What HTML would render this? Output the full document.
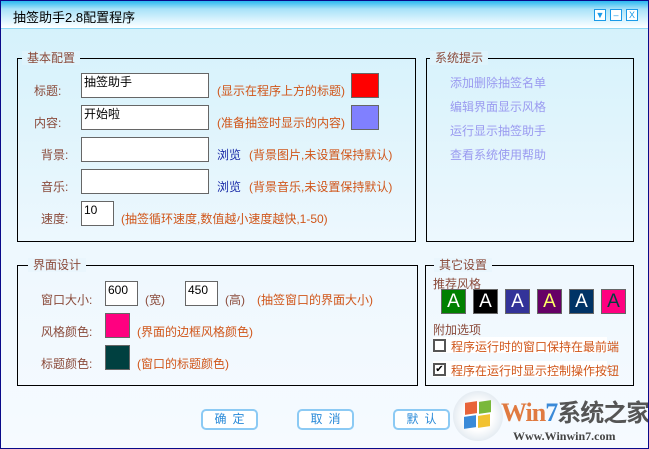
<!DOCTYPE html>
<html><head><meta charset="utf-8">
<style>
*{margin:0;padding:0;box-sizing:border-box}
body{width:649px;height:449px;overflow:hidden;font-family:"Liberation Sans","Noto Sans CJK SC",sans-serif;font-size:12px}
#w{position:absolute;left:0;top:0;width:649px;height:449px;border:1px solid #0a0a8a;background:linear-gradient(#d2f1fb 0px,#dff4fc 120px,#eef8fe 250px,#f6faff 449px);overflow:hidden}
#tb{position:absolute;left:0;top:0;width:647px;height:28px;background:linear-gradient(#2ab8f0 0px,#a8e2f8 8px,#e8f8ff 22px,#fff 27px);border-bottom:1px solid #8fd8f4}
#tt{position:absolute;left:12px;top:6px;font-size:13px;color:#000}
.wb{position:absolute;top:8px;width:12px;height:12px;border:1px solid #1a9ae8;background:#fff;color:#1a9ae8;font-size:9px;line-height:10px;text-align:center}
.a{position:absolute;white-space:nowrap}
.box{position:absolute;border:1px solid #000}
.lg{position:absolute;background:#dff4fc;padding:0 5px;color:#8a4a3a;font-size:12px;line-height:14px}
.lb{color:#8a4a3a}
.h{color:#d0561a}
.in{position:absolute;background:#fff;border:1px solid #666;font-size:12px;padding:1px 2px;line-height:14px;color:#000}
.sw{position:absolute;border:1px solid #666}
.lk{color:#9a9af0}
.bt{position:absolute;width:57px;height:21px;border:2px solid #8ccaf4;border-radius:5px;background:#fff;color:#2a8ad8;text-align:center;line-height:17px;letter-spacing:6px;padding-left:6px}
.st{position:absolute;top:288px;width:25px;height:25px;border:1px solid #666;color:#fff;font-size:19px;text-align:center;line-height:23px}
.cb{position:absolute;left:432px;width:13px;height:13px;border:2px solid #555;background:#fff;font-size:10px;line-height:9px;text-align:center}
</style></head><body><div id="w">
<div id="tb"><div id="tt">抽签助手2.8配置程序</div>
<div class="wb" style="left:593px">▼</div><div class="wb" style="left:609px">–</div><div class="wb" style="left:625px">X</div></div>

<div class="box" style="left:16px;top:57px;width:399px;height:184px"></div>
<div class="lg" style="left:21px;top:50px">基本配置</div>
<div class="box" style="left:425px;top:57px;width:208px;height:184px"></div>
<div class="lg" style="left:429px;top:50px">系统提示</div>

<div class="a lb" style="left:33px;top:81px">标题:</div>
<div class="in" style="left:80px;top:72px;width:128px;height:25px">抽签助手</div>
<div class="a h" style="left:216px;top:81px">(显示在程序上方的标题)</div>
<div class="sw" style="left:350px;top:72px;width:28px;height:25px;background:#f00"></div>

<div class="a lb" style="left:33px;top:113px">内容:</div>
<div class="in" style="left:80px;top:104px;width:128px;height:25px">开始啦</div>
<div class="a h" style="left:216px;top:113px">(准备抽签时显示的内容)</div>
<div class="sw" style="left:350px;top:104px;width:28px;height:25px;background:#8080ff"></div>

<div class="a lb" style="left:40px;top:145px">背景:</div>
<div class="in" style="left:80px;top:136px;width:128px;height:25px"></div>
<div class="a" style="left:216px;top:145px;color:#1a2aa8">浏览</div>
<div class="a h" style="left:248px;top:145px">(背景图片,未设置保持默认)</div>

<div class="a lb" style="left:40px;top:177px">音乐:</div>
<div class="in" style="left:80px;top:168px;width:128px;height:25px"></div>
<div class="a" style="left:216px;top:177px;color:#1a2aa8">浏览</div>
<div class="a h" style="left:248px;top:177px">(背景音乐,未设置保持默认)</div>

<div class="a lb" style="left:40px;top:209px">速度:</div>
<div class="in" style="left:80px;top:200px;width:33px;height:25px">10</div>
<div class="a h" style="left:120px;top:209px">(抽签循环速度,数值越小速度越快,1-50)</div>

<div class="a lk" style="left:449px;top:73px">添加删除抽签名单</div>
<div class="a lk" style="left:449px;top:97px">编辑界面显示风格</div>
<div class="a lk" style="left:449px;top:121px">运行显示抽签助手</div>
<div class="a lk" style="left:449px;top:145px">查看系统使用帮助</div>

<div class="box" style="left:16px;top:264px;width:401px;height:121px"></div>
<div class="lg" style="left:27px;top:257px;background:#eaf6fd">界面设计</div>
<div class="box" style="left:424px;top:264px;width:209px;height:121px"></div>
<div class="lg" style="left:433px;top:257px;background:#eaf6fd">其它设置</div>

<div class="a lb" style="left:40px;top:290px">窗口大小:</div>
<div class="in" style="left:104px;top:280px;width:33px;height:25px">600</div>
<div class="a lb" style="left:144px;top:290px">(宽)</div>
<div class="in" style="left:184px;top:280px;width:33px;height:25px">450</div>
<div class="a lb" style="left:224px;top:290px">(高)</div>
<div class="a h" style="left:256px;top:290px">(抽签窗口的界面大小)</div>

<div class="a lb" style="left:40px;top:322px">风格颜色:</div>
<div class="sw" style="left:104px;top:312px;width:25px;height:25px;background:#ff0080"></div>
<div class="a h" style="left:136px;top:322px">(界面的边框风格颜色)</div>
<div class="a lb" style="left:40px;top:354px">标题颜色:</div>
<div class="sw" style="left:104px;top:344px;width:25px;height:25px;background:#004040"></div>
<div class="a h" style="left:136px;top:354px">(窗口的标题颜色)</div>

<div class="a lb" style="left:432px;top:274px">推荐风格</div>
<div class="st" style="left:440px;background:#008000">A</div>
<div class="st" style="left:472px;background:#000">A</div>
<div class="st" style="left:504px;background:#333399">A</div>
<div class="st" style="left:536px;background:#660066;color:#ffff66">A</div>
<div class="st" style="left:568px;background:#003366">A</div>
<div class="st" style="left:600px;background:#ff0080;color:#004040">A</div>
<div class="a lb" style="left:432px;top:320px">附加选项</div>
<div class="a" style="left:432px;top:336px;width:174px;height:16px;background:#fff"></div>
<div class="cb" style="top:338px"></div>
<div class="a h" style="left:450px;top:337px">程序运行时的窗口保持在最前端</div>
<div class="a" style="left:432px;top:360px;width:174px;height:16px;background:#fff"></div>
<div class="cb" style="top:362px">✔</div>
<div class="a h" style="left:450px;top:361px">程序在运行时显示控制操作按钮</div>

<div class="bt" style="left:200px;top:408px">确定</div>
<div class="bt" style="left:296px;top:408px">取消</div>
<div class="bt" style="left:392px;top:408px">默认</div>

<div class="a" style="left:452px;top:390px;width:50px;height:50px;border-radius:50%;background:radial-gradient(circle,#fff 40%,#dde6ee 80%,#c8d4de)"></div>
<div class="a" style="left:464px;top:401px;width:12px;height:12px;background:#e8643a;transform:skewY(-8deg)"></div>
<div class="a" style="left:478px;top:400px;width:12px;height:12px;background:#7ab83a;transform:skewY(-8deg)"></div>
<div class="a" style="left:463px;top:415px;width:12px;height:12px;background:#3a8ad8;transform:skewY(-8deg)"></div>
<div class="a" style="left:477px;top:414px;width:12px;height:12px;background:#f2c232;transform:skewY(-8deg)"></div>
<div class="a" style="left:500px;top:395px;font-family:'Liberation Serif',serif;font-weight:bold;font-size:26px;line-height:30px;color:#e07a40;letter-spacing:-1px">Win<span style="color:#3a8ad8">7</span><span style="color:#555;font-family:'Noto Sans CJK SC',sans-serif;font-size:24px">系统之家</span></div>
<div class="a" style="left:512px;top:428px;font-family:'Liberation Serif',serif;font-weight:bold;font-size:12px;color:#444">Www.Winwin7.com</div>
</div></body></html>
